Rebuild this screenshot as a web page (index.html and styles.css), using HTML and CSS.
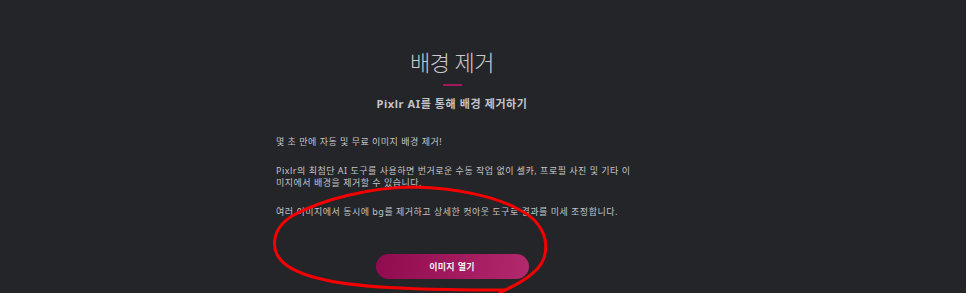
FILE: index.html
```html
<!DOCTYPE html>
<html lang="ko">
<head>
  <meta charset="UTF-8">
  <title>배경 제거</title>
  <meta name="viewport" content="width=device-width, initial-scale=1.0">
  <link rel="stylesheet" href="styles.css">
</head>
<body>
  <div class="page">
    <div class="hero">
      <h1 class="title">배경 제거</h1>
      <div class="bar"></div>
      <h2 class="subtitle">Pixlr AI를 통해 배경 제거하기</h2>

      <div class="copy">
        <p>몇 초 만에 자동 및 무료 이미지 배경 제거!</p>
        <p>Pixlr의 최첨단 AI 도구를 사용하면 번거로운 수동 작업 없이 셀카, 프로필 사진 및 기타 이미지에서 배경을 제거할 수 있습니다.</p>
        <p>여러 이미지에서 동시에 bg를 제거하고 상세한 컷아웃 도구로 결과를 미세 조정합니다.</p>
      </div>

      <button class="open">이미지 열기</button>
    </div>
  </div>

  <svg class="mark" width="966" height="293" viewBox="0 0 966 293">
    <path d="M 498 294 C 515 285, 538 275, 544 258 C 550 238, 540 220, 520 210 C 495 196, 455 188, 415 187 C 370 187, 320 200, 292 216 C 270 230, 270 252, 285 264 C 305 280, 350 286, 400 288 C 440 290, 480 290, 505 290 L 515 285" />
  </svg>
</body>
</html>
```

FILE: styles.css
```css
html {
  margin: 0;
  padding: 0;
}
body {
  margin: 0;
  height: 293px;
  overflow: hidden;
  background-color: #232529;
  color: #c3c4c7;
  font-family: "Noto Sans", "Noto Sans CJK KR", sans-serif;
}
.page {
  width: 904px;
}
.hero {
  width: 352px;
  margin: 0 auto;
  padding-top: 49px;
  display: flex;
  flex-direction: column;
  align-items: center;
}
.title {
  margin: 0;
  font-size: 22px;
  line-height: 26px;
  font-weight: 300;
  letter-spacing: -0.5px;
  color: #c9cacd;
}
.bar {
  width: 19px;
  height: 2px;
  margin-top: 9px;
  background: #a3175c;
}
.subtitle {
  margin: 10px 0 0;
  font-size: 11px;
  line-height: 16px;
  font-weight: 700;
  letter-spacing: 0.6px;
  color: #c3c4c7;
}
.copy {
  align-self: flex-start;
  width: 360px;
  margin-top: 24px;
}
.copy p {
  margin: 0 0 17px;
  font-size: 9px;
  line-height: 12px;
  letter-spacing: 0.5px;
}
.copy p:last-child {
  margin-bottom: 0;
}
.open {
  margin-top: 36px;
  width: 153px;
  height: 25px;
  border: 0;
  border-radius: 13px;
  background: linear-gradient(100deg, #900b4e 0%, #a31a5f 55%, #b3296d 100%);
  color: #f2f2f4;
  font-family: "Noto Sans CJK KR", sans-serif;
  font-size: 9px;
  font-weight: 700;
  letter-spacing: 0.3px;
}
.mark {
  position: absolute;
  top: 0;
  left: 0;
  pointer-events: none;
}
.mark path {
  fill: none;
  stroke: #f50000;
  stroke-width: 3;
  stroke-linecap: round;
  stroke-linejoin: round;
}
```
